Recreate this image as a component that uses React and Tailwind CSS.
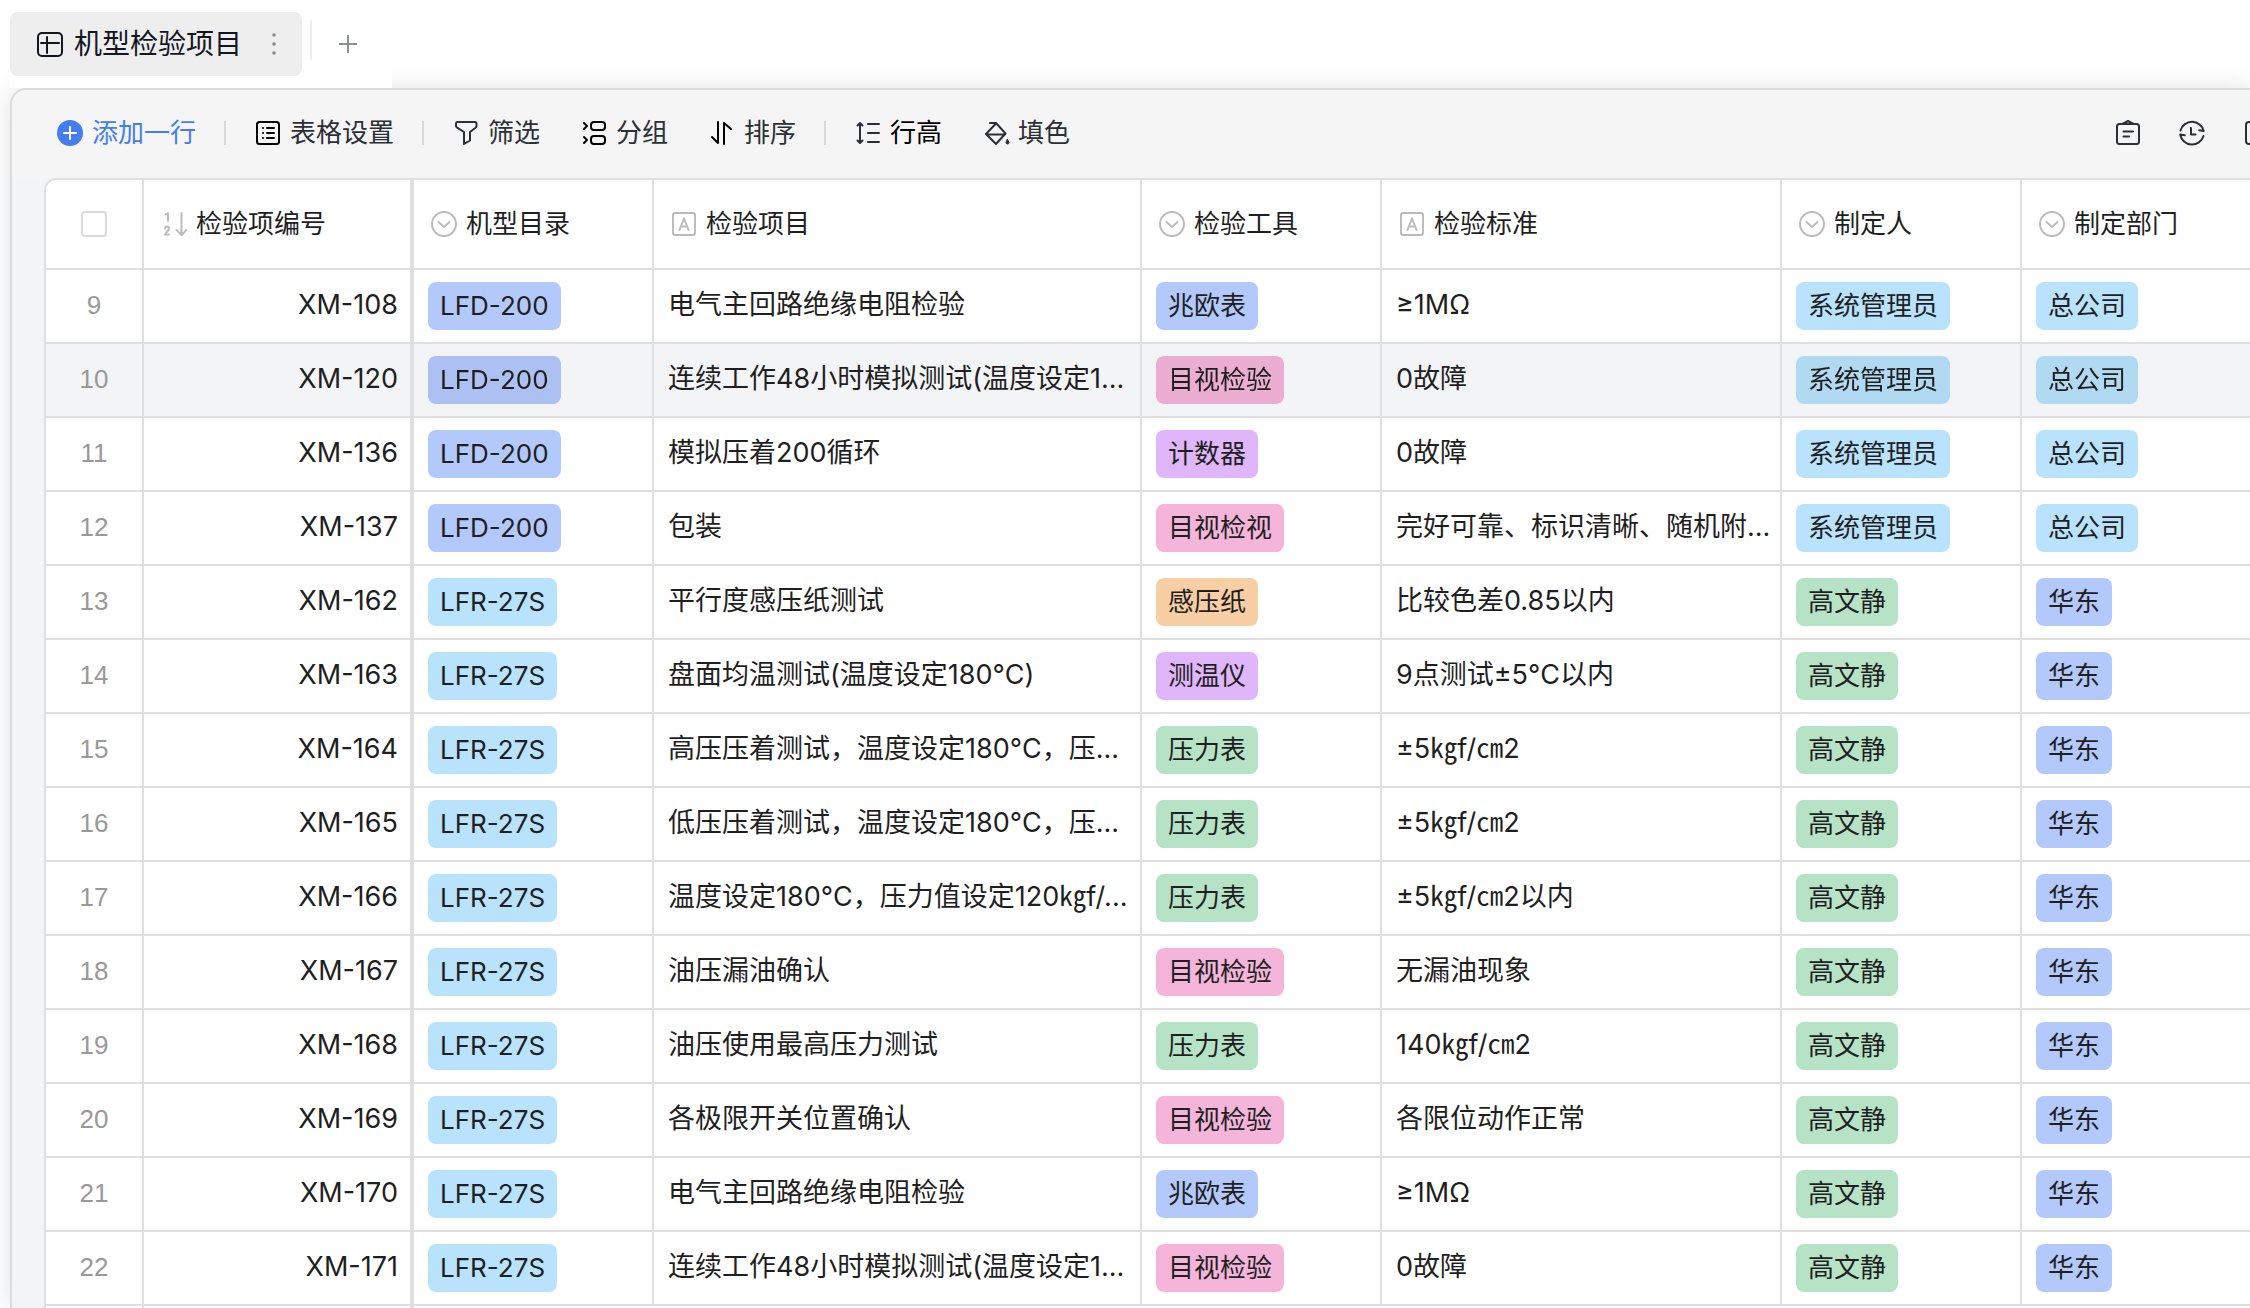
import React, { useState } from 'react';
import clsx from 'clsx';

const TAG_COLORS = {
  blue: 'bg-[#b3c8fb]',
  sky: 'bg-[#b9e2fc]',
  pink: 'bg-[#f5b5da]',
  purple: 'bg-[#dfb6fa]',
  orange: 'bg-[#f8cfa4]',
  green: 'bg-[#b6e2c6]',
};

const LFD = { label: 'LFD-200', color: 'blue' };
const LFR = { label: 'LFR-27S', color: 'sky' };
const MEGGER = { label: '兆欧表', color: 'blue' };
const VISUAL = { label: '目视检验', color: 'pink' };
const GAUGE = { label: '压力表', color: 'green' };
const ADMIN = { label: '系统管理员', color: 'sky' };
const GAO = { label: '高文静', color: 'green' };
const HQ = { label: '总公司', color: 'sky' };
const EAST = { label: '华东', color: 'blue' };

const rows = [
  { no: 9, code: 'XM-108', model: LFD, item: '电气主回路绝缘电阻检验', tool: MEGGER, standard: '≥1MΩ', author: ADMIN, dept: HQ },
  { no: 10, code: 'XM-120', model: LFD, item: '连续工作48小时模拟测试(温度设定1...', tool: VISUAL, standard: '0故障', author: ADMIN, dept: HQ },
  { no: 11, code: 'XM-136', model: LFD, item: '模拟压着200循环', tool: { label: '计数器', color: 'purple' }, standard: '0故障', author: ADMIN, dept: HQ },
  { no: 12, code: 'XM-137', model: LFD, item: '包装', tool: { label: '目视检视', color: 'pink' }, standard: '完好可靠、标识清晰、随机附...', author: ADMIN, dept: HQ },
  { no: 13, code: 'XM-162', model: LFR, item: '平行度感压纸测试', tool: { label: '感压纸', color: 'orange' }, standard: '比较色差0.85以内', author: GAO, dept: EAST },
  { no: 14, code: 'XM-163', model: LFR, item: '盘面均温测试(温度设定180°C)', tool: { label: '测温仪', color: 'purple' }, standard: '9点测试±5°C以内', author: GAO, dept: EAST },
  { no: 15, code: 'XM-164', model: LFR, item: '高压压着测试，温度设定180°C，压...', tool: GAUGE, standard: '±5㎏f/㎝2', author: GAO, dept: EAST },
  { no: 16, code: 'XM-165', model: LFR, item: '低压压着测试，温度设定180°C，压...', tool: GAUGE, standard: '±5㎏f/㎝2', author: GAO, dept: EAST },
  { no: 17, code: 'XM-166', model: LFR, item: '温度设定180°C，压力值设定120㎏f/...', tool: GAUGE, standard: '±5㎏f/㎝2以内', author: GAO, dept: EAST },
  { no: 18, code: 'XM-167', model: LFR, item: '油压漏油确认', tool: VISUAL, standard: '无漏油现象', author: GAO, dept: EAST },
  { no: 19, code: 'XM-168', model: LFR, item: '油压使用最高压力测试', tool: GAUGE, standard: '140㎏f/㎝2', author: GAO, dept: EAST },
  { no: 20, code: 'XM-169', model: LFR, item: '各极限开关位置确认', tool: VISUAL, standard: '各限位动作正常', author: GAO, dept: EAST },
  { no: 21, code: 'XM-170', model: LFR, item: '电气主回路绝缘电阻检验', tool: MEGGER, standard: '≥1MΩ', author: GAO, dept: EAST },
  { no: 22, code: 'XM-171', model: LFR, item: '连续工作48小时模拟测试(温度设定1...', tool: VISUAL, standard: '0故障', author: GAO, dept: EAST },
];

const Icon = ({ children, className }) => (
  <svg
    viewBox="0 0 28 28"
    fill="none"
    stroke="currentColor"
    strokeWidth="2"
    strokeLinecap="round"
    strokeLinejoin="round"
    aria-hidden="true"
    className={clsx('size-7 shrink-0', className)}
  >
    {children}
  </svg>
);

const GridIcon = () => (
  <Icon>
    <rect x="2" y="3" width="24" height="23" rx="4" />
    <path d="M5 13h18M11 7v16" />
  </Icon>
);

const AddIcon = () => (
  <Icon>
    <circle cx="14" cy="14" r="13" fill="currentColor" stroke="none" />
    <path d="M14 8v12M8 14h12" stroke="#fff" />
  </Icon>
);

const ListIcon = () => (
  <Icon className="text-black">
    <rect x="3" y="3" width="22" height="22" rx="2.5" />
    <path d="M13 9h7M13 14h7M13 19h7" />
    <path d="M9 9h.1M9 14h.1M9 19h.1" />
  </Icon>
);

const FilterIcon = () => (
  <Icon>
    <path d="M5 3h18q1.500 0 1.500 1.500V7q0 1-1 1.800L18 13v8.500L12 25V13L5.500 8.800Q4 8 4 7V4.500Q4 3 5 3z" />
  </Icon>
);

const GroupIcon = () => (
  <Icon className="text-black">
    <rect x="11" y="3" width="14" height="8" rx="3" />
    <rect x="11" y="17" width="14" height="8" rx="3" />
    <path d="M4 4l3 3-3 3M4 18l3 3-3 3" />
  </Icon>
);

const SortIcon = () => (
  <Icon className="text-black">
    <path d="M10 3v21l-6-6M16 25V4l7 6" />
  </Icon>
);

const RowHeightIcon = () => (
  <Icon className="text-[#2b2f36]">
    <path d="M6 4v20M3.500 6.500L6 4l2.500 2.500M3.500 21.500L6 24l2.500-2.500" />
    <path d="M14 5h11M14 14h11M14 23h11" />
  </Icon>
);

const FillIcon = () => (
  <Icon>
    <path d="M8 4h6l9.500 10.500L14 25 4 15 14 4.500M5 15.500h18" />
    <path d="M25.500 20.500l1.500 3a1.500 1.500 0 0 1-3 0z" fill="currentColor" strokeWidth="1" />
  </Icon>
);

const ClipboardIcon = () => (
  <Icon>
    <rect x="3" y="5" width="22" height="20" rx="2.5" />
    <path d="M8.500 5L14 2l5.500 3M9.500 12.500h9.500M9.500 17.500h5.500" />
  </Icon>
);

const HistoryIcon = () => (
  <Icon>
    <path d="M2.500 11.500A12 12 0 0 1 25.700 12l-4.500-.8" />
    <path d="M25.500 17A12 12 0 0 1 2.200 15.500l4.500.8" />
    <path d="M13 9v6.500h4.500" />
  </Icon>
);

const PanelIcon = () => (
  <Icon>
    <rect x="4" y="3" width="22" height="22" rx="3" />
  </Icon>
);

const NumberTypeIcon = () => (
  <Icon>
    <path d="M5.500 4.500L8 3v8" />
    <path d="M5 18.500q0-2 2-2t2 2q0 1.200-1.500 2.700L5 24.500h4" />
    <path d="M21.500 3v22M16.500 20l5 5 5-5" />
  </Icon>
);

const SelectTypeIcon = () => (
  <Icon>
    <circle cx="14" cy="14" r="12" />
    <path d="M8.500 12l5.500 5 5.500-5" />
  </Icon>
);

const TextTypeIcon = () => (
  <Icon>
    <rect x="3" y="3" width="22" height="22" rx="2" />
    <path d="M9.500 20L14 8.500 18.500 20M11 16.500h6" />
  </Icon>
);

const columns = [
  { label: '检验项编号', icon: NumberTypeIcon, width: 'w-[270px]', frozen: true },
  { label: '机型目录', icon: SelectTypeIcon, width: 'w-60' },
  { label: '检验项目', icon: TextTypeIcon, width: 'w-[488px]' },
  { label: '检验工具', icon: SelectTypeIcon, width: 'w-60' },
  { label: '检验标准', icon: TextTypeIcon, width: 'w-[400px]' },
  { label: '制定人', icon: SelectTypeIcon, width: 'w-60' },
  { label: '制定部门', icon: SelectTypeIcon, width: 'w-60' },
];

const ToolButton = ({ icon: ButtonIcon, label, className }) => (
  <button type="button" className={clsx('flex items-center gap-2 whitespace-nowrap', className)}>
    <ButtonIcon />
    {label}
  </button>
);

const Divider = () => <span className="h-6 w-0.5 bg-[#d8d8d8]" />;

const Tag = ({ tag, dim }) => (
  <span
    className={clsx(
      'inline-flex h-12 items-center rounded-lg px-3 align-middle',
      TAG_COLORS[tag.color],
      dim && 'brightness-[.96]'
    )}
  >
    {tag.label}
  </span>
);

const App = () => {
  const [activeRow, setActiveRow] = useState(10);
  const cell = 'h-[74px] border-r-2 border-b-2 border-[#dfdfdf] pt-0';

  return (
    <div className="flex h-screen flex-col overflow-hidden bg-white font-['Inter','Noto_Sans_CJK_SC',sans-serif] text-[26px] leading-9 text-[#1f1f1f]">
      {/* Sheet tabs */}
      <div className="relative z-10 ml-2.5 flex h-[88px] w-[382px] shrink-0 items-start bg-white pt-3">
        <div className="flex h-16 items-center rounded-lg bg-[#eeeeee] pl-[26px] text-[28px] text-[#14161f]">
          <button type="button" className="flex items-center gap-2.5 whitespace-nowrap">
            <GridIcon />
            机型检验项目
          </button>
          <button type="button" aria-label="更多" className="flex w-[60px] justify-center pl-1 text-[#8a8a8a]">
            <svg viewBox="0 0 28 28" fill="currentColor" className="size-7" aria-hidden="true">
              <circle cx="14" cy="5" r="1.8" />
              <circle cx="14" cy="14" r="1.8" />
              <circle cx="14" cy="23" r="1.8" />
            </svg>
          </button>
        </div>
        <span className="mt-2 ml-2 h-10 w-0.5 bg-[#eeeeee]" />
        <button type="button" aria-label="新建表格" className="ml-[22px] flex h-16 items-center text-[#8a8f99]">
          <Icon>
            <path d="M14 5v18M5 14h18" strokeLinecap="butt" />
          </Icon>
        </button>
      </div>

      <div className="ml-2.5 flex min-h-0 grow flex-col rounded-tl-2xl border-t-2 border-l-2 border-[#d9dbdd] bg-[#f3f4f6] shadow-[0_0_24px_rgba(0,0,0,0.12)]">
        {/* Toolbar */}
        <div className="flex h-[88px] shrink-0 items-center justify-between rounded-tl-2xl bg-[#f5f5f5] pb-0.5 pl-11 text-[#2b2f36]">
          <div className="flex items-center gap-7">
            <ToolButton icon={AddIcon} label="添加一行" className="text-[#437df0]" />
            <Divider />
            <ToolButton icon={ListIcon} label="表格设置" />
            <Divider />
            <div className="flex items-center gap-10">
              <ToolButton icon={FilterIcon} label="筛选" />
              <ToolButton icon={GroupIcon} label="分组" />
              <ToolButton icon={SortIcon} label="排序" />
            </div>
            <Divider />
            <div className="flex items-center gap-10">
              <ToolButton icon={RowHeightIcon} label="行高" className="text-black" />
              <ToolButton icon={FillIcon} label="填色" />
            </div>
          </div>
          <div className="-mr-5 flex items-center gap-9">
            <button type="button" aria-label="表单"><ClipboardIcon /></button>
            <button type="button" aria-label="历史记录"><HistoryIcon /></button>
            <button type="button" aria-label="侧栏"><PanelIcon /></button>
          </div>
        </div>

        {/* Data grid */}
        <div className="ml-8 min-h-0 grow overflow-hidden rounded-tl-xl border-t-2 border-l-2 border-[#dfdfdf] bg-white">
          <table className="w-[2216px] table-fixed border-separate border-spacing-0 whitespace-nowrap">
            <thead>
              <tr>
                <th className="h-[90px] w-[98px] border-r-2 border-b-2 border-[#dfdfdf] p-0">
                  <input
                    type="checkbox"
                    aria-label="全选"
                    className="mx-auto block size-[26px] appearance-none rounded-sm border-2 border-[#d9d9d9] bg-white"
                  />
                </th>
                {columns.map(({ label, icon: TypeIcon, width, frozen }) => (
                  <th
                    key={label}
                    className={clsx('h-[90px] border-b-2 border-[#dfdfdf] py-0 pr-0 pl-4 font-normal', width, frozen ? 'border-r-4' : 'border-r-2')}
                  >
                    <div className="flex items-center gap-2">
                      <span className="text-[#bbbcc0]"><TypeIcon /></span>
                      {label}
                    </div>
                  </th>
                ))}
              </tr>
            </thead>
            <tbody>
              {rows.map((row) => {
                const active = row.no === activeRow;
                return (
                  <tr key={row.no} onMouseEnter={() => setActiveRow(row.no)} className={clsx(active && 'bg-[#f3f4f6]')}>
                    <td className={clsx(cell, "px-0 pb-0.5 text-center font-['Liberation_Sans',sans-serif] text-[#999999]")}>{row.no}</td>
                    <td className={clsx(cell, 'border-r-4 px-3 pb-0.5 text-right text-[27px]')}>{row.code}</td>
                    <td className={clsx(cell, 'px-3.5 pb-0')}><Tag tag={row.model} dim={active} /></td>
                    <td className={clsx(cell, 'px-3.5 pb-0.5 text-[27px]')}>{row.item}</td>
                    <td className={clsx(cell, 'px-3.5 pb-0')}><Tag tag={row.tool} dim={active} /></td>
                    <td className={clsx(cell, 'px-3.5 pb-0.5 text-[27px]')}>{row.standard}</td>
                    <td className={clsx(cell, 'px-3.5 pb-0')}><Tag tag={row.author} dim={active} /></td>
                    <td className={clsx(cell, 'px-3.5 pb-0')}><Tag tag={row.dept} dim={active} /></td>
                  </tr>
                );
              })}
            </tbody>
            <tfoot>
              <tr>
                <td className="h-12 border-r-2 border-[#dfdfdf]" />
                <td className="border-r-4 border-[#dfdfdf]" />
                <td colSpan={6} />
              </tr>
            </tfoot>
          </table>
        </div>
      </div>
    </div>
  );
};

export default App;
